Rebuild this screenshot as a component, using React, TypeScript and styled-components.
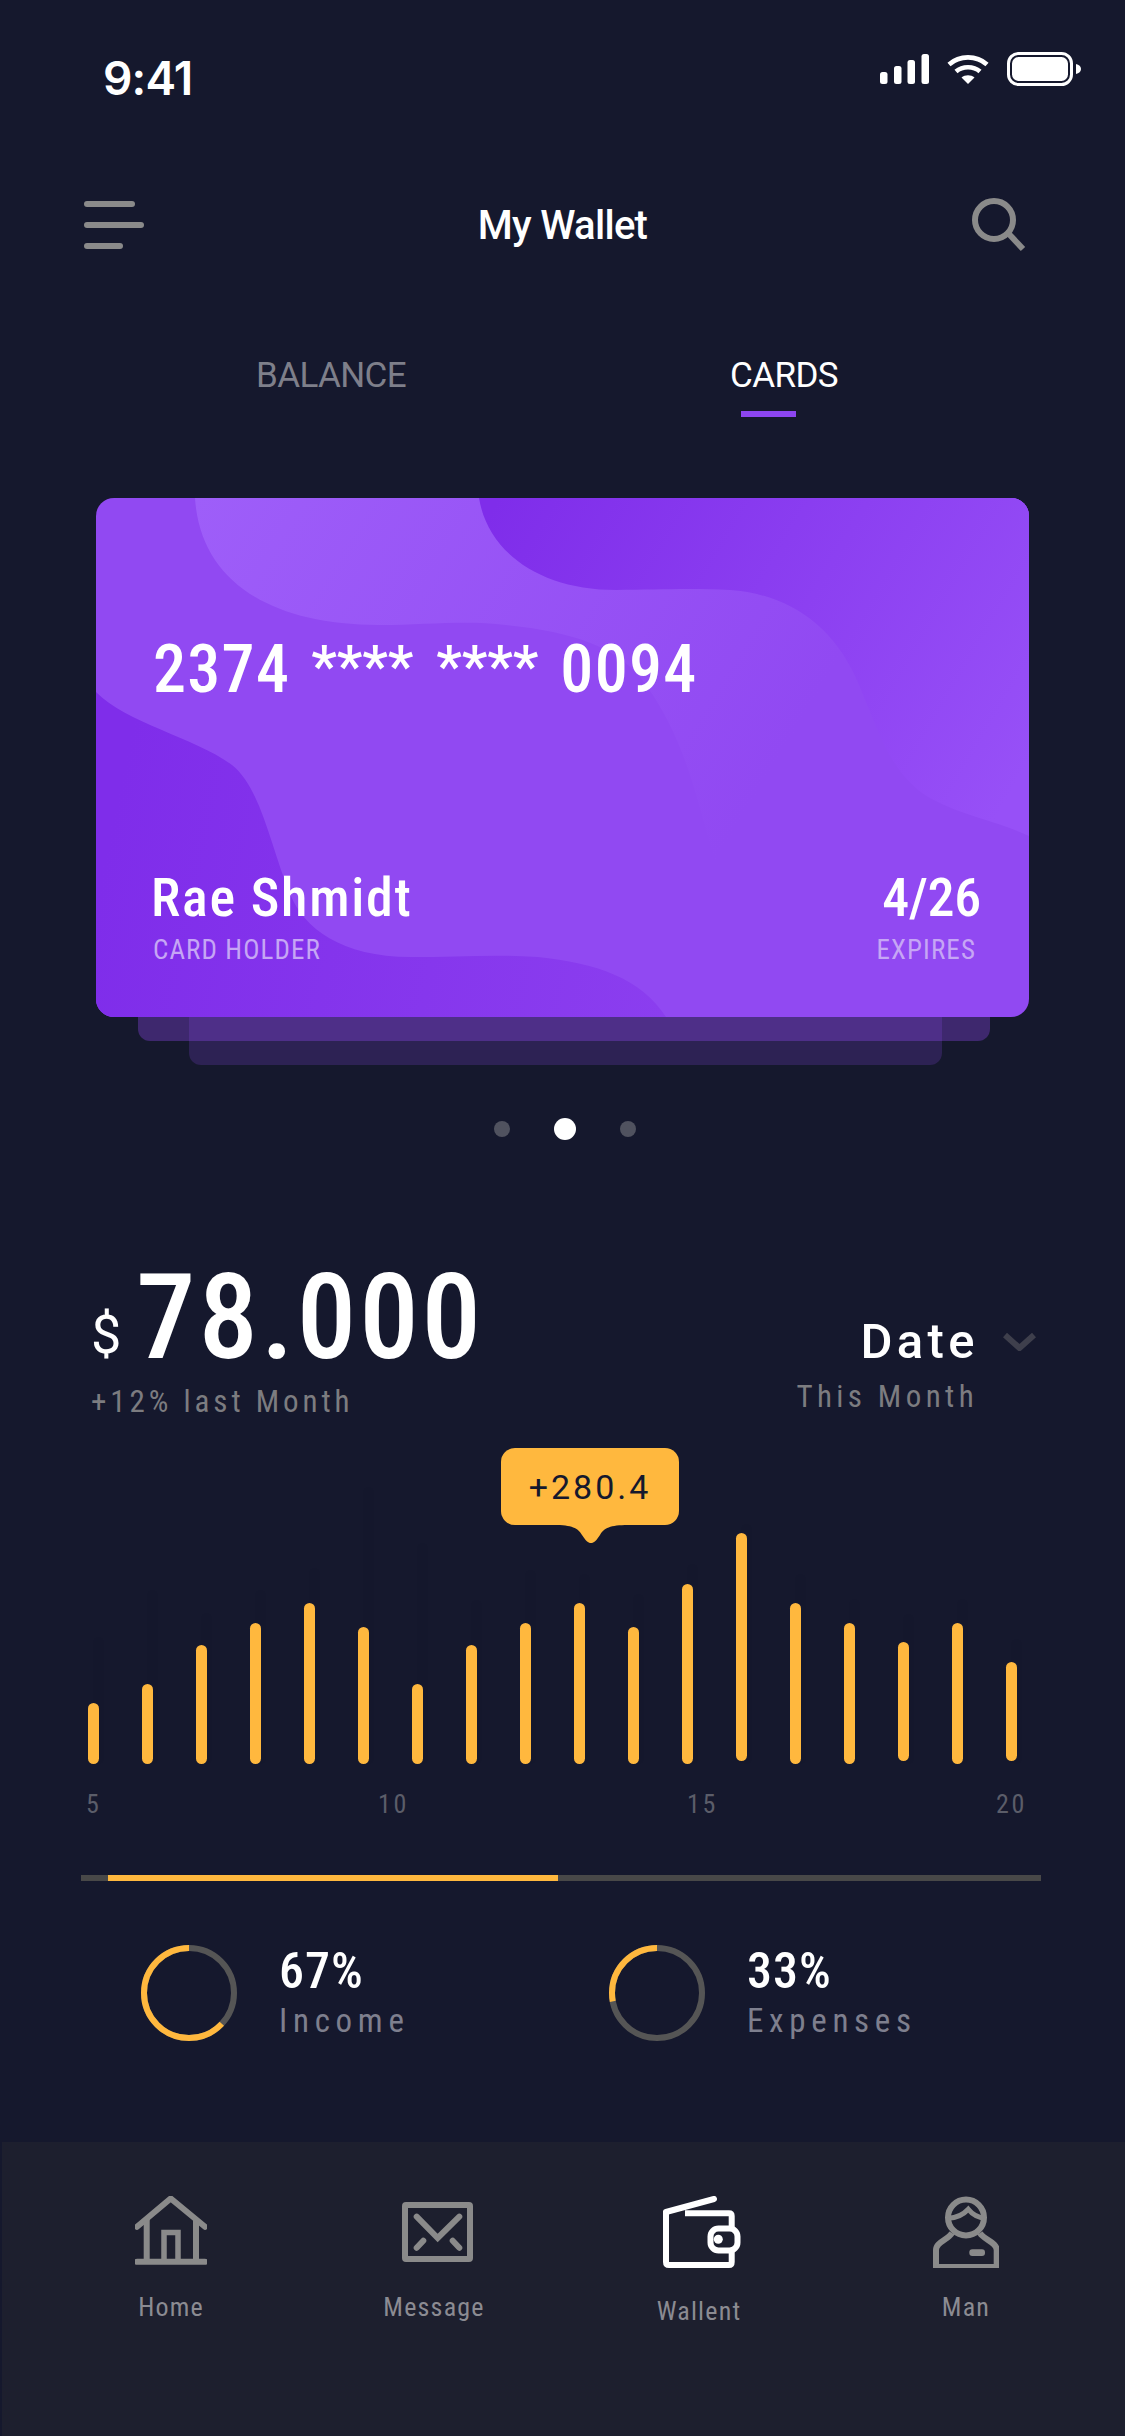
import styled, { createGlobalStyle } from 'styled-components';

const GlobalStyle = createGlobalStyle`
  html, body {
    margin: 0;
    padding: 0;
    background: #15182d;
  }
  * {
    box-sizing: border-box;
  }
`;

const Page = styled.div`
  width: 1125px;
  height: 2436px;
  overflow: hidden;
  background: #15182d;
  color: #fff;
  font-family: Roboto, "Liberation Sans", sans-serif;
  font-stretch: 85%;
`;

const StatusBar = styled.div`
  display: flex;
  justify-content: space-between;
  align-items: flex-start;
  height: 198px;
  padding: 50px 44px 0 103px;
`;

const Time = styled.div`
  font-family: Inter, "Liberation Sans", sans-serif;
  font-size: 46px;
  font-weight: 600;
  line-height: 56px;
  letter-spacing: -0.8px;
`;

const StatusIcons = styled.div`
  display: flex;
  align-items: flex-start;
  padding-top: 2px;
  gap: 18px;
`;

const Header = styled.div`
  display: grid;
  grid-template-columns: 1fr auto 1fr;
  align-items: center;
  height: 54px;
  padding: 0 84px;
`;

const Menu = styled.div`
  display: flex;
  flex-direction: column;
  gap: 15px;
`;

const MenuLine = styled.span<{ $w: number }>`
  display: block;
  width: ${(p) => p.$w}px;
  height: 6px;
  border-radius: 3px;
  background: #8a8a8a;
`;

const Title = styled.div`
  padding-top: 2px;
  font-size: 40px;
  font-stretch: 92%;
  font-weight: 500;
  line-height: 52px;
  letter-spacing: -0.7px;
`;

const SearchButton = styled.div`
  justify-self: end;
  margin-right: 15px;
  height: 54px;
`;

const Tabs = styled.div`
  display: grid;
  grid-template-columns: 474px auto;
  margin-top: 100px;
  padding-left: 256px;
`;

const Tab = styled.div<{ $active?: boolean }>`
  padding-top: 2px;
  font-size: 35px;
  font-stretch: 92%;
  line-height: 44px;
  letter-spacing: -0.6px;
  color: ${(p) => (p.$active ? '#fff' : '#7e7f8a')};
`;

const TabLine = styled.div`
  width: 55px;
  height: 6px;
  margin: 13px 0 0 11px;
  background: #8c45f0;
`;

const CardStack = styled.div`
  margin: 81px 0 0 96px;
`;

const Card = styled.div`
  position: relative;
  display: flex;
  flex-direction: column;
  justify-content: space-between;
  width: 933px;
  height: 519px;
  padding: 142px 48px 52px 57px;
  border-radius: 18px;
  overflow: hidden;
  background: #9149f2;
`;

const CardArt = styled.svg`
  position: absolute;
  top: 0;
  left: 0;
`;

const CardNumber = styled.div`
  position: relative;
  display: flex;
  align-items: flex-start;
  font-size: 66px;
  font-weight: 500;
  line-height: 60px;
  letter-spacing: 1.3px;
`;

const Stars = styled.span`
  margin: -4px 23px 0 21px;
  font-size: 58px;
  letter-spacing: -0.2px;
  line-height: 60px;
  &:last-of-type {
    margin-left: 0;
    margin-right: 22px;
  }
`;

const CardFooter = styled.div`
  position: relative;
  display: flex;
  justify-content: space-between;
`;

const CardCol = styled.div<{ $right?: boolean }>`
  display: flex;
  flex-direction: column;
  align-items: ${(p) => (p.$right ? 'flex-end' : 'flex-start')};
`;

const CardValue = styled.div<{ $right?: boolean }>`
  margin-left: ${(p) => (p.$right ? 0 : -2)}px;
  padding-top: 3px;
  font-size: 54px;
  font-weight: 500;
  line-height: 60px;
  letter-spacing: ${(p) => (p.$right ? '-0.3px' : '1.7px')};
`;

const CardLabel = styled.div<{ $right?: boolean }>`
  margin: 7px ${(p) => (p.$right ? '5px' : '0')} 0 0;
  font-size: 27px;
  line-height: 30px;
  letter-spacing: 1.1px;
  color: #c6a6f5;
`;

const Shelf = styled.div`
  width: 852px;
  height: 24px;
  margin-left: 42px;
  border-radius: 0 0 12px 12px;
  background: rgba(145, 73, 242, 0.33);
`;

const ShelfBack = styled.div`
  width: 753px;
  height: 48px;
  margin: -24px 0 0 93px;
  border-radius: 0 0 12px 12px;
  background: rgba(145, 73, 242, 0.2);
`;

const Dots = styled.div`
  display: flex;
  align-items: center;
  gap: 44px;
  margin-top: 53px;
  padding-left: 494px;
`;

const Dot = styled.span<{ $active?: boolean }>`
  width: ${(p) => (p.$active ? 22 : 16)}px;
  height: ${(p) => (p.$active ? 22 : 16)}px;
  border-radius: 50%;
  background: ${(p) => (p.$active ? '#fff' : '#50525f')};
`;

const Summary = styled.div`
  display: flex;
  justify-content: space-between;
  margin-top: 113px;
  padding: 0 89px 0 91px;
`;

const AmountRow = styled.div`
  display: flex;
  align-items: flex-end;
  height: 130px;
`;

const Currency = styled.span`
  width: 45px;
  padding-bottom: 18px;
  font-size: 54px;
  font-stretch: 100%;
  line-height: 60px;
`;

const Amount = styled.span`
  font-size: 119px;
  font-weight: 500;
  line-height: 130px;
  letter-spacing: 2.9px;
`;

const Hint = styled.div<{ $right?: boolean }>`
  margin-top: ${(p) => (p.$right ? '12px' : '1px')};
  margin-right: ${(p) => (p.$right ? '58px' : '0')};
  font-size: 31px;
  line-height: 36px;
  letter-spacing: ${(p) => (p.$right ? '4.4px' : '3.95px')};
  color: #7c7c80;
`;

const DateCol = styled.div`
  display: flex;
  flex-direction: column;
  align-items: flex-end;
  padding-top: 64px;
`;

const DateRow = styled.div`
  display: flex;
  align-items: center;
  gap: 24px;
  height: 50px;
  font-size: 49px;
  font-stretch: 92%;
  font-weight: 500;
  line-height: 50px;
  letter-spacing: 4.4px;
`;

const Chart = styled.div`
  position: relative;
  display: flex;
  align-items: flex-end;
  gap: 43px;
  height: 316px;
  margin-top: 28px;
  padding-left: 88px;
`;

const Slot = styled.div`
  position: relative;
  width: 11px;
`;

const Bar = styled.div<{ $h: number; $lift: number }>`
  position: relative;
  width: 11px;
  height: ${(p) => p.$h}px;
  margin-bottom: ${(p) => p.$lift}px;
  border-radius: 6px;
  background: #ffb83e;
`;

const Ghost = styled.div<{ $h: number }>`
  position: absolute;
  left: 5px;
  bottom: 0;
  width: 11px;
  height: ${(p) => p.$h}px;
  border-radius: 6px;
  background: rgba(0, 0, 0, 0.018);
`;

const Tooltip = styled.div`
  position: absolute;
  top: 0;
  left: 501px;
  width: 178px;
  height: 77px;
  border-radius: 14px;
  background: #ffb83e;
  color: #15182d;
  font-size: 34px;
  font-stretch: 92%;
  line-height: 78px;
  letter-spacing: 3px;
  text-align: center;
`;

const TooltipTip = styled.svg`
  position: absolute;
  top: 76px;
  left: 53px;
`;

const AxisRow = styled.div`
  display: grid;
  grid-template-columns: 292px 309px 309px auto;
  margin-top: 25px;
  padding-left: 86px;
  font-size: 26px;
  line-height: 30px;
  letter-spacing: 2.6px;
  color: #5b5d69;
`;

const Track = styled.div`
  display: flex;
  width: 960px;
  height: 6px;
  margin: 56px 0 0 81px;
  background: #484848;
`;

const TrackFill = styled.div<{ $w: number }>`
  width: ${(p) => p.$w}px;
  margin-left: 27px;
  background: #ffb83e;
`;

const Stats = styled.div`
  display: flex;
  margin-top: 64px;
  padding-left: 141px;
`;

const Stat = styled.div`
  display: flex;
  gap: 42px;
  width: 468px;
`;

const StatValue = styled.div`
  padding-top: 1px;
  font-size: 50px;
  font-weight: 500;
  line-height: 50px;
  letter-spacing: 1px;
`;

const StatLabel = styled.div`
  margin-top: 5px;
  font-size: 33px;
  line-height: 40px;
  letter-spacing: 5.7px;
  color: #7e7f8e;
`;

const Nav = styled.div`
  display: grid;
  grid-template-columns: 266px 268px 260px 268px;
  height: 294px;
  margin: 101px 0 0 2px;
  padding: 54px 0 0 36px;
  background: #1d1f2e;
`;

const NavItem = styled.div`
  display: flex;
  flex-direction: column;
  align-items: center;
`;

const NavLabel = styled.div<{ $active?: boolean; $shift?: number }>`
  margin-top: ${(p) => (p.$active ? 28 : 24)}px;
  margin-right: ${(p) => p.$shift ?? 0}px;
  font-size: 26px;
  line-height: 30px;
  letter-spacing: 1.2px;
  color: #8b8b92;
`;

const bars = [
  { h: 61, lift: 0, ghost: 127 },
  { h: 80, lift: 0, ghost: 174 },
  { h: 119, lift: 0, ghost: 151 },
  { h: 141, lift: 0, ghost: 174 },
  { h: 161, lift: 0, ghost: 196 },
  { h: 137, lift: 0, ghost: 277 },
  { h: 80, lift: 0, ghost: 221 },
  { h: 119, lift: 0, ghost: 164 },
  { h: 141, lift: 0, ghost: 194 },
  { h: 161, lift: 0, ghost: 190 },
  { h: 137, lift: 0, ghost: 170 },
  { h: 180, lift: 0, ghost: 200 },
  { h: 228, lift: 3, ghost: 240 },
  { h: 161, lift: 0, ghost: 190 },
  { h: 141, lift: 0, ghost: 165 },
  { h: 119, lift: 3, ghost: 150 },
  { h: 141, lift: 0, ghost: 165 },
  { h: 99, lift: 3, ghost: 125 },
];

const Donut = ({ pct }: { pct: number }) => (
  <svg width="96" height="96" viewBox="0 0 96 96" style={{ flexShrink: 0 }}>
    <circle cx="48" cy="48" r="45" fill="none" stroke="#555555" strokeWidth="6" />
    <circle
      cx="48"
      cy="48"
      r="45"
      fill="none"
      stroke="#ffb83e"
      strokeWidth="6"
      pathLength={100}
      strokeDasharray={`${pct} 100`}
      transform="rotate(-90 48 48) scale(1 -1) translate(0 -96)"
    />
  </svg>
);

const App = () => (
  <Page>
    <GlobalStyle />
    <StatusBar>
      <Time>9:41</Time>
      <StatusIcons>
        <svg width="49" height="30" viewBox="0 0 49 30" fill="#fff" style={{ marginTop: 2 }}>
          <rect x="0" y="18" width="7.5" height="12" rx="2.5" />
          <rect x="14" y="12" width="7.5" height="18" rx="2.5" />
          <rect x="27.5" y="6" width="7.5" height="24" rx="2.5" />
          <rect x="41.5" y="0" width="7.5" height="30" rx="2.5" />
        </svg>
        <svg width="42" height="30" viewBox="0 0 42 30" fill="none" style={{ marginTop: 2 }}>
          <path d="M2 10.5C12.5 1 29.5 1 40 10.5" stroke="#fff" strokeWidth="4.6" />
          <path d="M9 17.5C15.5 11.8 26.5 11.8 33 17.5" stroke="#fff" strokeWidth="4.6" />
          <path d="M14.5 23.5C18 20.4 24 20.4 27.5 23.5L21 30Z" fill="#fff" />
        </svg>
        <svg width="74" height="34" viewBox="0 0 74 34" fill="none">
          <rect x="1.5" y="1.5" width="63" height="31" rx="10" stroke="#fff" strokeWidth="3" />
          <rect x="5" y="5" width="56" height="24" rx="6.5" fill="#fff" />
          <path d="M69 12C72 12.5 74 14.5 74 17C74 19.5 72 21.5 69 22Z" fill="#fff" />
        </svg>
      </StatusIcons>
    </StatusBar>

    <Header>
      <Menu>
        <MenuLine $w={51} />
        <MenuLine $w={60} />
        <MenuLine $w={39} />
      </Menu>
      <Title>My Wallet</Title>
      <SearchButton>
        <svg width="54" height="54" viewBox="0 0 54 54" fill="none" stroke="#8a8a8a" strokeWidth="6">
          <circle cx="22" cy="22" r="19" />
          <path d="M36 35L51 51" />
        </svg>
      </SearchButton>
    </Header>

    <Tabs>
      <Tab>BALANCE</Tab>
      <div>
        <Tab $active>CARDS</Tab>
        <TabLine />
      </div>
    </Tabs>

    <CardStack>
      <Card>
        <CardArt width="933" height="519" viewBox="0 0 933 519">
          <defs>
            <linearGradient id="lightWave" gradientUnits="userSpaceOnUse" x1="100" y1="0" x2="640" y2="330">
              <stop offset="0" stopColor="#9e5ef9" />
              <stop offset="1" stopColor="#9149f2" />
            </linearGradient>
            <linearGradient id="topWave" gradientUnits="userSpaceOnUse" x1="390" y1="20" x2="900" y2="320">
              <stop offset="0" stopColor="#7f2dea" />
              <stop offset="1" stopColor="#9750f7" />
            </linearGradient>
            <linearGradient id="leftWave" gradientUnits="userSpaceOnUse" x1="0" y1="400" x2="570" y2="519">
              <stop offset="0" stopColor="#7f2dea" />
              <stop offset="1" stopColor="#8b3eef" />
            </linearGradient>
          </defs>
          <path
            d="M99 0C104 80 170 127 283 127C330 127 370 122 410 127C480 134 520 150 545 180C590 240 600 300 618 360C625 385 640 420 660 440L933 440L933 0Z"
            fill="url(#lightWave)"
          />
          <path
            d="M383 0C392 55 445 92 520 92C560 92 590 90 634 92C690 96 735 125 760 180C782 230 790 265 822 292C852 315 900 322 933 338L933 0Z"
            fill="url(#topWave)"
          />
          <path
            d="M0 194C30 225 100 240 136 267C165 290 175 350 194 396C208 430 245 459 315 459C360 459 400 456 442 459C500 465 545 480 570 519L0 519Z"
            fill="url(#leftWave)"
          />
        </CardArt>
        <CardNumber>
          2374
          <Stars>****</Stars>
          <Stars>****</Stars>
          0094
        </CardNumber>
        <CardFooter>
          <CardCol>
            <CardValue>Rae Shmidt</CardValue>
            <CardLabel>CARD HOLDER</CardLabel>
          </CardCol>
          <CardCol $right>
            <CardValue $right>4/26</CardValue>
            <CardLabel $right>EXPIRES</CardLabel>
          </CardCol>
        </CardFooter>
      </Card>
      <Shelf />
      <ShelfBack />
    </CardStack>

    <Dots>
      <Dot />
      <Dot $active />
      <Dot />
    </Dots>

    <Summary>
      <div>
        <AmountRow>
          <Currency>$</Currency>
          <Amount>78.000</Amount>
        </AmountRow>
        <Hint>+12% last Month</Hint>
      </div>
      <DateCol>
        <DateRow>
          Date
          <svg width="33" height="18" viewBox="0 0 33 18" fill="none" stroke="#3e3f4c" strokeWidth="6">
            <path d="M2 2L16.5 15L31 2" />
          </svg>
        </DateRow>
        <Hint $right>This Month</Hint>
      </DateCol>
    </Summary>

    <Chart>
      {bars.map((b, i) => (
        <Slot key={i}>
          <Ghost $h={b.ghost} />
          <Bar $h={b.h} $lift={b.lift} />
        </Slot>
      ))}
      <Tooltip>
        +280.4
        <TooltipTip width="74" height="19" viewBox="0 0 74 19" fill="#ffb83e">
          <path d="M0 0H74V1C56 1 50 4 46 11C42 17 40 19 37 19C34 19 32 17 28 11C24 4 18 1 0 1Z" />
        </TooltipTip>
      </Tooltip>
    </Chart>

    <AxisRow>
      <span>5</span>
      <span>10</span>
      <span>15</span>
      <span>20</span>
    </AxisRow>

    <Track>
      <TrackFill $w={450} />
    </Track>

    <Stats>
      <Stat>
        <Donut pct={63} />
        <div>
          <StatValue>67%</StatValue>
          <StatLabel>Income</StatLabel>
        </div>
      </Stat>
      <Stat>
        <Donut pct={28} />
        <div>
          <StatValue>33%</StatValue>
          <StatLabel>Expenses</StatLabel>
        </div>
      </Stat>
    </Stats>

    <Nav>
      <NavItem>
        <svg width="72" height="72" viewBox="0 0 72 72" fill="none" stroke="#8a8a8a" strokeWidth="6" strokeLinecap="round">
          <path d="M2 30.7L35.7 2.5L70 30.7" />
          <path d="M11.7 23V65M61 23V65" strokeLinecap="butt" />
          <path d="M29 65V36.5H43V65" strokeWidth="5.5" strokeLinecap="butt" />
          <path d="M2 65.7H70" />
        </svg>
        <NavLabel>Home</NavLabel>
      </NavItem>
      <NavItem>
        <svg width="72" height="72" viewBox="0 -6 72 72" fill="none" stroke="#8a8a8a" strokeWidth="6" strokeLinecap="round">
          <rect x="3" y="3" width="65" height="54" rx="1" />
          <path d="M14.7 14.7L35.7 36L57.3 14.7" />
          <path d="M14.7 45.7L21.3 38.7M57.3 45.7L50.7 38.7" />
        </svg>
        <NavLabel $shift={8}>Message</NavLabel>
      </NavItem>
      <NavItem>
        <svg width="78" height="72" viewBox="0 0 78 72" fill="none" stroke="#fff" strokeWidth="6" strokeLinecap="round">
          <path d="M3 16L51 3" />
          <path d="M3 16V66Q3 69 6 69H66Q68.7 69 68.7 66V54M68.7 32V20Q68.7 17.3 66 17.3H22" strokeLinecap="butt" />
          <rect x="47.5" y="32.5" width="27" height="22" rx="8" />
          <circle cx="55.3" cy="43.3" r="4.5" fill="#fff" stroke="none" />
        </svg>
        <NavLabel $active $shift={6}>Wallent</NavLabel>
      </NavItem>
      <NavItem>
        <svg width="66" height="72" viewBox="0 0 66 72" fill="none" stroke="#8a8a8a" strokeWidth="6">
          <ellipse cx="33" cy="21.5" rx="18" ry="18" />
          <path d="M15.3 22.3C24 22 30 19 35.3 13.3C39 18 44 21.5 52 22.3" strokeWidth="5" />
          <path d="M19 37C15 44 3 46 3 54V71H63.7V54C63.7 46 51 44 47 37" />
          <rect x="36.3" y="53.3" width="15.7" height="6.7" rx="3" fill="#8a8a8a" stroke="none" />
        </svg>
        <NavLabel>Man</NavLabel>
      </NavItem>
    </Nav>
  </Page>
);

export default App;
